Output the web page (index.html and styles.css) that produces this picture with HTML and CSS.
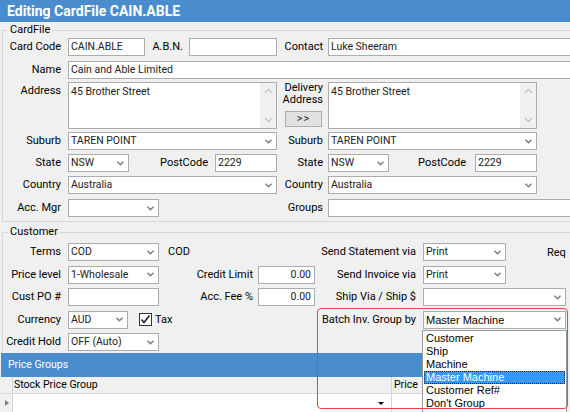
FILE: index.html
```html
<!DOCTYPE html>
<html lang="en">
<head>
    <meta charset="UTF-8">
    <title>Editing CardFile CAIN.ABLE</title>
    <link rel="stylesheet" href="styles.css">
</head>
<body>
<div class="window">
    <!-- Title -->
    <div class="titlebar">Editing CardFile CAIN.ABLE</div>

    <!-- CardFile group -->
    <fieldset class="group cardfile">
        <legend>CardFile</legend>

        <div class="row r1">
            <label class="lbl">Card Code</label>
            <div class="field w77">CAIN.ABLE</div>
            <label class="lbl abn">A.B.N.</label>
            <div class="field w88"></div>
            <label class="lbl rlbl">Contact</label>
            <div class="field grow">Luke Sheeram</div>
        </div>

        <div class="row r-name">
            <label class="lbl">Name</label>
            <div class="field grow">Cain and Able Limited</div>
        </div>

        <div class="row r-addr">
            <div class="half">
                <label class="lbl top">Address</label>
                <div class="memo">
                    <div class="memo-text">45 Brother Street</div>
                    <div class="vscroll">
                        <svg width="9" height="6" viewBox="0 0 9 6"><polyline points="1,5 4.5,1.5 8,5" fill="none" stroke="#c2c2c2" stroke-width="1.3"/></svg>
                        <svg width="9" height="6" viewBox="0 0 9 6"><polyline points="1,1 4.5,4.5 8,1" fill="none" stroke="#c2c2c2" stroke-width="1.3"/></svg>
                    </div>
                </div>
            </div>
            <div class="delivery-lbl">
                <span>Delivery<br>Address</span>
                <button class="copy-btn">&gt;&gt;</button>
            </div>
            <div class="memo">
                <div class="memo-text">45 Brother Street</div>
                <div class="vscroll">
                    <svg width="9" height="6" viewBox="0 0 9 6"><polyline points="1,5 4.5,1.5 8,5" fill="none" stroke="#c2c2c2" stroke-width="1.3"/></svg>
                    <svg width="9" height="6" viewBox="0 0 9 6"><polyline points="1,1 4.5,4.5 8,1" fill="none" stroke="#c2c2c2" stroke-width="1.3"/></svg>
                </div>
            </div>
        </div>

        <div class="row r-suburb">
            <div class="half">
                <label class="lbl">Suburb</label>
                <div class="field combo w209"><span>TAREN POINT</span><svg width="7" height="5" viewBox="0 0 7 5"><polyline points="0.5,0.7 3.5,3.7 6.5,0.7" fill="none" stroke="#7a7a7a" stroke-width="1.4"/></svg></div>
            </div>
            <label class="lbl rlbl">Suburb</label>
            <div class="field combo w209"><span>TAREN POINT</span><svg width="7" height="5" viewBox="0 0 7 5"><polyline points="0.5,0.7 3.5,3.7 6.5,0.7" fill="none" stroke="#7a7a7a" stroke-width="1.4"/></svg></div>
        </div>

        <div class="row r-state">
            <div class="half">
                <label class="lbl">State</label>
                <div class="field combo w61"><span>NSW</span><svg width="7" height="5" viewBox="0 0 7 5"><polyline points="0.5,0.7 3.5,3.7 6.5,0.7" fill="none" stroke="#7a7a7a" stroke-width="1.4"/></svg></div>
                <label class="lbl pc">PostCode</label>
                <div class="field w62">2229</div>
            </div>
            <label class="lbl rlbl">State</label>
            <div class="field combo w61"><span>NSW</span><svg width="7" height="5" viewBox="0 0 7 5"><polyline points="0.5,0.7 3.5,3.7 6.5,0.7" fill="none" stroke="#7a7a7a" stroke-width="1.4"/></svg></div>
            <label class="lbl pc pc-r">PostCode</label>
            <div class="field w62">2229</div>
        </div>

        <div class="row r-country">
            <div class="half">
                <label class="lbl">Country</label>
                <div class="field combo w209"><span>Australia</span><svg width="7" height="5" viewBox="0 0 7 5"><polyline points="0.5,0.7 3.5,3.7 6.5,0.7" fill="none" stroke="#7a7a7a" stroke-width="1.4"/></svg></div>
            </div>
            <label class="lbl rlbl">Country</label>
            <div class="field combo w209"><span>Australia</span><svg width="7" height="5" viewBox="0 0 7 5"><polyline points="0.5,0.7 3.5,3.7 6.5,0.7" fill="none" stroke="#7a7a7a" stroke-width="1.4"/></svg></div>
        </div>

        <div class="row r-mgr">
            <div class="half">
                <label class="lbl">Acc. Mgr</label>
                <div class="field combo w91"><span></span><svg width="7" height="5" viewBox="0 0 7 5"><polyline points="0.5,0.7 3.5,3.7 6.5,0.7" fill="none" stroke="#7a7a7a" stroke-width="1.4"/></svg></div>
            </div>
            <label class="lbl rlbl">Groups</label>
            <div class="field grow"></div>
        </div>
    </fieldset>

    <!-- Customer group -->
    <fieldset class="group customer">
        <legend>Customer</legend>
        <div class="cust-grid">
            <label class="lbl">Terms</label>
            <div class="field combo w91"><span>COD</span><svg width="7" height="5" viewBox="0 0 7 5"><polyline points="0.5,0.7 3.5,3.7 6.5,0.7" fill="none" stroke="#7a7a7a" stroke-width="1.4"/></svg></div>
            <div class="note">COD</div>
            <div></div>
            <label class="lbl lbl-r">Send Statement via</label>
            <div class="cell">
                <div class="field combo w83"><span>Print</span><svg width="7" height="5" viewBox="0 0 7 5"><polyline points="0.5,0.7 3.5,3.7 6.5,0.7" fill="none" stroke="#7a7a7a" stroke-width="1.4"/></svg></div>
                <span class="req">Req</span>
            </div>

            <label class="lbl">Price level</label>
            <div class="field combo w91"><span>1-Wholesale</span><svg width="7" height="5" viewBox="0 0 7 5"><polyline points="0.5,0.7 3.5,3.7 6.5,0.7" fill="none" stroke="#7a7a7a" stroke-width="1.4"/></svg></div>
            <label class="lbl lbl-m">Credit Limit</label>
            <div class="field num">0.00</div>
            <label class="lbl lbl-r">Send Invoice via</label>
            <div class="field combo w83"><span>Print</span><svg width="7" height="5" viewBox="0 0 7 5"><polyline points="0.5,0.7 3.5,3.7 6.5,0.7" fill="none" stroke="#7a7a7a" stroke-width="1.4"/></svg></div>

            <label class="lbl">Cust PO #</label>
            <div class="field w91"></div>
            <label class="lbl lbl-m">Acc. Fee %</label>
            <div class="field num">0.00</div>
            <label class="lbl lbl-r">Ship Via / Ship $</label>
            <div class="field combo w143"><span></span><svg width="7" height="5" viewBox="0 0 7 5"><polyline points="0.5,0.7 3.5,3.7 6.5,0.7" fill="none" stroke="#7a7a7a" stroke-width="1.4"/></svg></div>

            <label class="lbl">Currency</label>
            <div class="cell span3">
                <div class="field combo w60"><span>AUD</span><svg width="7" height="5" viewBox="0 0 7 5"><polyline points="0.5,0.7 3.5,3.7 6.5,0.7" fill="none" stroke="#7a7a7a" stroke-width="1.4"/></svg></div>
                <span class="check"><svg width="11" height="11" viewBox="0 0 11 11"><polyline points="1.5,5.5 4,8.5 9.5,1.5" fill="none" stroke="#222" stroke-width="1.6"/></svg></span>
                <span class="check-lbl">Tax</span>
            </div>
            <label class="lbl lbl-r">Batch Inv. Group by</label>
            <div class="field combo w143 batch"><span>Master Machine</span><svg width="7" height="5" viewBox="0 0 7 5"><polyline points="0.5,0.7 3.5,3.7 6.5,0.7" fill="none" stroke="#7a7a7a" stroke-width="1.4"/></svg></div>

            <label class="lbl">Credit Hold</label>
            <div class="field combo w91"><span>OFF (Auto)</span><svg width="7" height="5" viewBox="0 0 7 5"><polyline points="0.5,0.7 3.5,3.7 6.5,0.7" fill="none" stroke="#7a7a7a" stroke-width="1.4"/></svg></div>
        </div>
    </fieldset>

    <!-- Price Groups grid -->
    <div class="panel">
        <div class="panel-head">Price Groups</div>
        <div class="grid-head">
            <div class="sel-cell"></div>
            <div class="col-group">Stock Price Group</div>
            <div class="col-price">Price</div>
        </div>
        <div class="grid-row">
            <div class="sel-cell"><span class="row-arrow"></span></div>
            <div class="col-group"><span class="cell-drop"></span></div>
            <div class="col-price"></div>
        </div>
    </div>

    <!-- Open list of the Batch Inv. combo -->
    <ul class="drop-list">
        <li>Customer</li>
        <li>Ship</li>
        <li>Machine</li>
        <li class="selected">Master Machine</li>
        <li>Customer Ref#</li>
        <li>Don't Group</li>
    </ul>

    <!-- Red highlight annotation -->
    <div class="highlight"></div>
</div>
</body>
</html>
```

FILE: styles.css
```css
* {
    box-sizing: border-box;
}
body {
    margin: 0;
    background: #f0f0f0;
    font-family: Roboto, "Liberation Sans", sans-serif;
    font-size: 11px;
    color: #000;
    overflow: hidden;
}
.window {
    position: relative;
    width: 570px;
    height: 412px;
    overflow: hidden;
}

/* Title */
.titlebar {
    height: 22px;
    background: #4a8dcc;
    color: white;
    font-weight: bold;
    font-size: 14px;
    line-height: 22px;
    padding-left: 7px;
}

/* Group boxes */
.group {
    margin: 1px 0 0 2px;
    padding: 1px 0 4px 0;
    border: 1px solid #d7d7d7;
    border-right: none;
    min-width: 0;
}
.group legend {
    margin-left: 5px;
    padding: 0 2px;
    line-height: 14px;
    font-size: 11px;
}
.row {
    display: flex;
    height: 18px;
}
.r-name { margin-top: 5px; }
.r-addr { margin-top: 3px; height: 47px; }
.r-suburb { margin-top: 3px; }
.r-state { margin-top: 4px; }
.r-country { margin-top: 4px; }
.r-mgr { margin-top: 5px; }

.half {
    display: flex;
    width: 274px;
    flex: none;
}
.lbl {
    width: 65px;
    padding-right: 7px;
    text-align: right;
    line-height: 18px;
    white-space: nowrap;
    flex: none;
}
.lbl.top { line-height: 14px; padding-top: 2px; }
.lbl.abn { width: 44px; padding-right: 6px; }
.lbl.rlbl { width: 51px; padding-right: 5px; }
.lbl.pc { width: 86px; padding-right: 7px; }
.lbl.pc-r { padding-right: 9px; }

/* Inputs */
.field {
    height: 18px;
    border: 1px solid #acacac;
    background: white;
    color: #222;
    font-size: 10.5px;
    line-height: 16px;
    padding-left: 2px;
    white-space: nowrap;
    overflow: hidden;
    flex: none;
}
/* these run on past the right edge of the window */
.field.grow {
    flex: 1;
    border-right: none;
}
.w60 { width: 60px; }
.w61 { width: 61px; }
.w62 { width: 62px; }
.w77 { width: 77px; }
.w83 { width: 83px; }
.w88 { width: 88px; }
.w91 { width: 91px; }
.w143 { width: 143px; }
.w209 { width: 209px; }

.combo {
    display: flex;
    align-items: center;
}
.combo span {
    flex: 1;
    overflow: hidden;
}
.combo svg {
    flex: none;
    margin-right: 4px;
}

/* Multi line address */
.memo {
    display: flex;
    width: 209px;
    height: 47px;
    border: 1px solid #acacac;
    background: white;
    color: #222;
    font-size: 10.5px;
    flex: none;
}
.memo-text {
    flex: 1;
    padding: 2px 2px;
    line-height: 14px;
}
.vscroll {
    width: 16px;
    background: #f0f0f0;
    display: flex;
    flex-direction: column;
    justify-content: space-between;
    align-items: center;
    padding: 5px 0 5px;
}
.delivery-lbl {
    width: 51px;
    flex: none;
    display: flex;
    flex-direction: column;
    align-items: flex-end;
    padding-right: 5px;
    line-height: 12px;
    text-align: right;
}
.copy-btn {
    margin-top: 5px;
    margin-right: 1px;
    width: 37px;
    height: 16px;
    padding: 0;
    background: #e1e1e1;
    border: 1px solid #adadad;
    font-family: Roboto, "Liberation Sans", sans-serif;
    font-size: 11px;
    line-height: 14px;
    color: #222;
    letter-spacing: 1px;
}

/* Customer section */
.customer {
    margin-top: 3px;
    padding: 4px 0 2px 0;
    border-bottom: none;
}
.cust-grid {
    display: grid;
    grid-template-columns: 65px 91px 99px 57px 108px 1fr;
    grid-auto-rows: 18px;
    row-gap: 4.5px;
}
.cust-grid > .field {
    justify-self: start;
}
.lbl.lbl-m { width: auto; padding-right: 5px; }
.lbl.lbl-r { width: auto; padding-right: 7px; }
.note {
    padding-left: 9px;
    line-height: 18px;
}
.field.num {
    width: 57px;
    text-align: right;
    padding-right: 3px;
}
.cell {
    display: flex;
    align-items: center;
}
.span3 {
    grid-column: 2 / 5;
}
.req {
    margin-left: 41px;
}
.check {
    margin-left: 11px;
    width: 13px;
    height: 13px;
    border: 1px solid #333;
    background: white;
    display: flex;
    align-items: center;
    justify-content: center;
}
.check-lbl {
    margin-left: 3px;
}
.batch span {
    font-family: "Liberation Sans", sans-serif;
    font-size: 11px;
    color: #000;
}

/* Price groups grid */
.panel {
    margin-left: 1px;
    width: 566px;
}
.panel-head {
    height: 24px;
    background: #4a8dcc;
    color: white;
    line-height: 24px;
    padding-left: 7px;
    font-size: 10.5px;
}
.grid-head {
    display: flex;
    height: 17px;
    background: #f0f0f0;
    border-bottom: 1px solid #d5d5d5;
    line-height: 16px;
    font-size: 10.5px;
}
.grid-row {
    display: flex;
    height: 18px;
    background: white;
}
.sel-cell {
    width: 12px;
    border-right: 1px solid #d5d5d5;
    background: #f0f0f0;
    flex: none;
}
.col-group {
    width: 379px;
    border-right: 1px solid #d5d5d5;
    padding-left: 1px;
    flex: none;
    position: relative;
}
.col-price {
    flex: 1;
    padding-left: 2px;
}
.row-arrow {
    display: block;
    margin: 6px 0 0 4px;
    width: 0;
    height: 0;
    border-top: 3px solid transparent;
    border-bottom: 3px solid transparent;
    border-left: 4px solid #808080;
}
.cell-drop {
    position: absolute;
    right: 7px;
    top: 8px;
    width: 0;
    height: 0;
    border-left: 3px solid transparent;
    border-right: 3px solid transparent;
    border-top: 3px solid #000;
}

/* Dropdown list overlay */
.drop-list {
    position: absolute;
    left: 422px;
    top: 330px;
    width: 145px;
    height: 82px;
    margin: 0;
    padding: 1px 1px;
    overflow: hidden;
    list-style: none;
    background: white;
    border: 1px solid #9a9a9a;
    border-bottom: none;
    font-family: "Liberation Sans", sans-serif;
    font-size: 11px;
}
.drop-list li {
    height: 13px;
    line-height: 12px;
    padding-left: 1px;
    border: 1px dotted transparent;
    border-width: 0 1px;
}
.drop-list li.selected {
    background: #3399ff;
    color: white;
    border: 1px dotted #222;
    line-height: 11px;
}

/* Red annotation box */
.highlight {
    position: absolute;
    left: 317px;
    top: 308px;
    width: 251px;
    height: 101px;
    border: 1px solid #e8434b;
    border-radius: 4px;
}
```
